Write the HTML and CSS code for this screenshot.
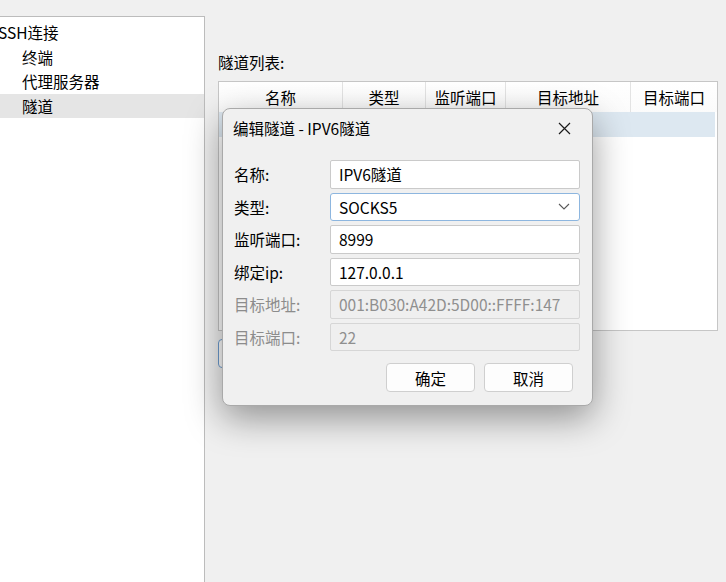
FILE: index.html
```html
<!DOCTYPE html>
<html lang="zh-CN">
<head>
  <meta charset="UTF-8">
  <title>隧道设置</title>
  <link rel="stylesheet" href="styles.css">
</head>
<body>
  <div class="window">
    <div class="tree">
      <div class="node root">SSH连接</div>
      <div class="node child">终端</div>
      <div class="node child">代理服务器</div>
      <div class="node child selected">隧道</div>
    </div>

    <div class="panel">
      <div class="panel-title">隧道列表:</div>
      <div class="grid">
        <div class="grid-head">
          <div class="col">名称</div>
          <div class="col">类型</div>
          <div class="col">监听端口</div>
          <div class="col">目标地址</div>
          <div class="col last">目标端口</div>
        </div>
        <div class="grid-row selected"></div>
      </div>
      <div class="panel-actions">
        <!-- covered by the dialog, only its left edge shows -->
        <button class="btn default" aria-label="添加"></button>
      </div>
    </div>
  </div>

  <div class="dialog">
    <div class="dialog-title">
      <span>编辑隧道 - IPV6隧道</span>
      <svg class="close" width="13" height="13" viewBox="0 0 13 13">
        <path d="M1 1 L12 12 M12 1 L1 12" stroke="#1a1a1a" stroke-width="1.2" fill="none"/>
      </svg>
    </div>
    <div class="form">
      <label>名称:</label>
      <div class="field">IPV6隧道</div>

      <label>类型:</label>
      <div class="field combo">
        <span>SOCKS5</span>
        <svg width="12" height="7" viewBox="0 0 12 7">
          <path d="M1 1 L6 6 L11 1" stroke="#5a5a5a" stroke-width="1.1" fill="none"/>
        </svg>
      </div>

      <label>监听端口:</label>
      <div class="field">8999</div>

      <label>绑定ip:</label>
      <div class="field">127.0.0.1</div>

      <label class="disabled">目标地址:</label>
      <div class="field disabled">001:B030:A42D:5D00::FFFF:147</div>

      <label class="disabled">目标端口:</label>
      <div class="field disabled">22</div>
    </div>
    <div class="dialog-buttons">
      <button class="btn">确定</button>
      <button class="btn">取消</button>
    </div>
  </div>
</body>
</html>
```

FILE: styles.css
```css
body {
  margin: 0;
  height: 582px;
  overflow: hidden;
  background-color: #f0f0f0;
  font-family: "Noto Sans CJK SC", "Microsoft YaHei", sans-serif;
  font-size: 15.5px;
  color: #000000;
}
.window {
  display: flex;
  height: 100vh;
}
.tree {
  box-sizing: border-box;
  width: 205px;
  margin-top: 16px;
  padding-top: 3px;
  background-color: #ffffff;
  border-top: 1px solid #bcbcbc;
  border-right: 1px solid #bcbcbc;
}
.node {
  height: 24.5px;
  line-height: 24.5px;
  white-space: nowrap;
}
.node.root {
  margin-left: -2px;
}
.node.child {
  padding-left: 22px;
}
.node.selected {
  background-color: #e5e5e5;
}
.panel {
  flex: 1;
  padding: 52px 8px 0 13px;
}
.panel-title {
  line-height: 20px;
  margin-bottom: 9px;
}
.grid {
  box-sizing: border-box;
  height: 250px;
  background-color: #ffffff;
  border: 1px solid #c6c6c6;
}
.grid-head {
  display: grid;
  grid-template-columns: 124px 83px 80px 125px 1fr;
  height: 30px;
  background: linear-gradient(#ffffff, #fbfbfb);
}
.grid-head .col {
  text-align: center;
  line-height: 30px;
  border-right: 1px solid #e3e3e3;
}
.grid-head .col.last {
  border-right: none;
}
.grid-row {
  height: 25px;
}
.grid-row.selected {
  background-color: #dde8f1;
  margin-right: 2px;
}
.panel-actions {
  margin-top: 8px;
}
.btn {
  box-sizing: border-box;
  width: 89px;
  height: 29px;
  padding: 0;
  font-family: inherit;
  font-size: 15.5px;
  color: #000000;
  background-color: #fdfdfd;
  border: 1px solid #cfcfcf;
  border-radius: 4px;
}
.btn.default {
  border-color: #6d9ccf;
}

.dialog {
  position: absolute;
  left: 222px;
  top: 108px;
  box-sizing: border-box;
  width: 371px;
  height: 298px;
  background-color: #f0f0f0;
  border: 1px solid #a9a9a9;
  border-radius: 8px;
  box-shadow: 0 12px 36px rgba(0, 0, 0, 0.4);
}
.dialog-title {
  display: flex;
  align-items: center;
  justify-content: space-between;
  height: 38px;
  padding: 0 21px 0 10px;
}
.form {
  display: grid;
  grid-template-columns: 96px 250px;
  grid-auto-rows: 28.5px;
  row-gap: 4px;
  padding: 13px 0 0 11px;
}
.form label {
  line-height: 28.5px;
}
.form label.disabled {
  color: #8c8c8c;
}
.field {
  box-sizing: border-box;
  padding-left: 8px;
  line-height: 26.5px;
  background-color: #ffffff;
  border: 1px solid #cacaca;
  border-radius: 2px;
  white-space: nowrap;
  overflow: hidden;
}
.field.combo {
  display: flex;
  align-items: center;
  justify-content: space-between;
  padding-right: 9px;
  border-color: #8db6df;
  border-radius: 3px;
}
.field.disabled {
  color: #8f8f8f;
  background-color: #efefef;
  border-color: #d6d6d6;
}
.dialog-buttons {
  display: flex;
  justify-content: flex-end;
  gap: 9px;
  margin-top: 12px;
  padding-right: 19px;
}
```
